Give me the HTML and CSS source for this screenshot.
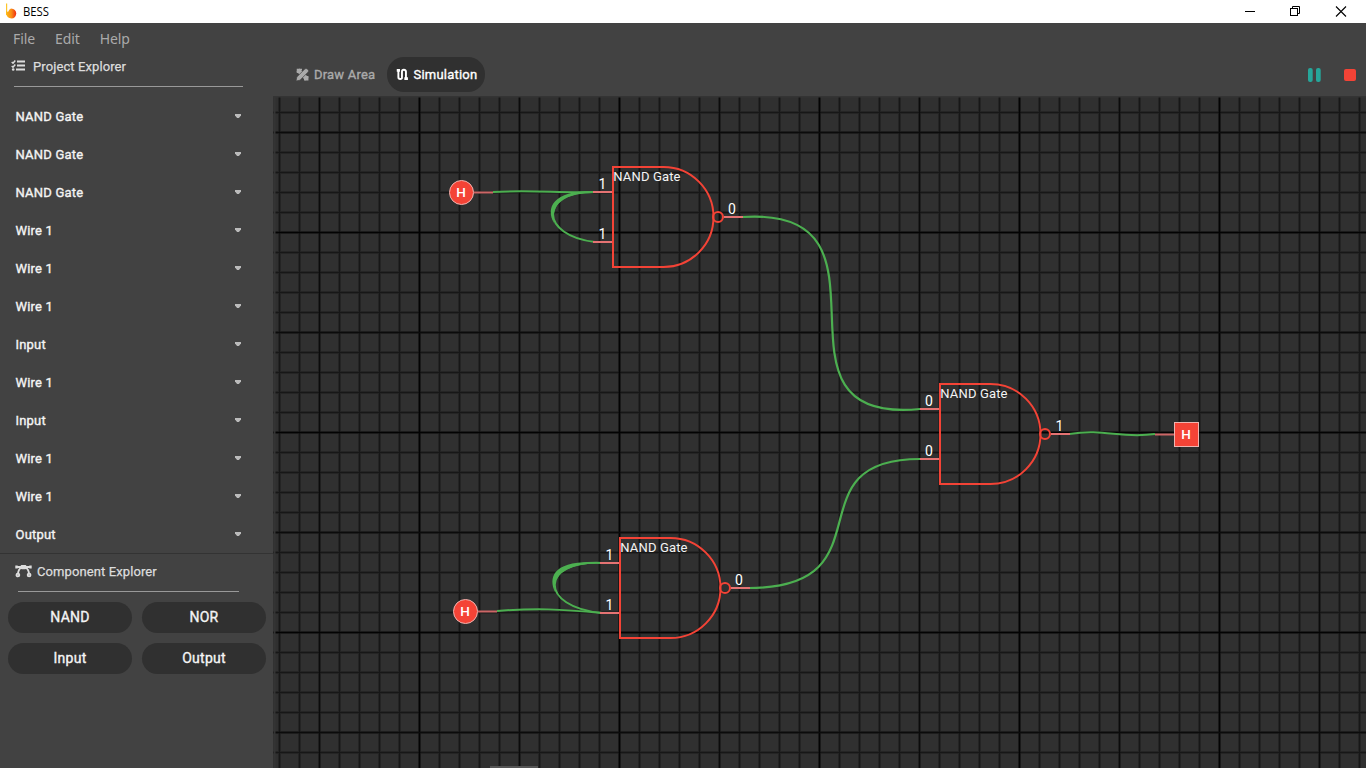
FILE: index.html
```html
<!DOCTYPE html>
<html lang="en"><head><meta charset="utf-8"><title>BESS</title><link rel="stylesheet" href="styles.css"></head>
<body>
<header class="titlebar">
<svg class="logo" width="12" height="17" viewBox="0 0 12 17"><defs><linearGradient id="flame"><stop offset="0" stop-color="#fdb913"/><stop offset=".5" stop-color="#f98e16"/><stop offset="1" stop-color="#ef2b13"/></linearGradient></defs><path d="M.6.5V12" stroke="#fdc52b" stroke-width="1.2"/><path d="M.2 8L2 9Q3 6 5 5.500Q10 6 10.300 10.500Q9.500 15.500 5.500 15.500Q1 15 .2 11Z" fill="url(#flame)"/></svg>
<span class="app-name">BESS</span>
<svg class="window-controls" width="106" height="22" viewBox="0 0 106 22" fill="none" stroke="#000"><path d="M1 10.500H11M48.500 7.500V5.500H55.500V12.500H53.500"/><rect x="46.500" y="7.500" width="7" height="7"/><path d="M92 5.500L102 15.500M102 5.500L92 15.500" stroke-width="1.100"/></svg>
</header>
<div class="app">
<aside class="sidebar">
<nav class="menu"><span>File</span><span>Edit</span><span>Help</span></nav>
<section class="project">
<h2 class="heading"><svg width="14" height="12" viewBox="0 0 14 12" fill="none" stroke="currentColor"><path d="M.7 2L2 3.200L4.300 .5M.7 6L2 7.200L4.300 4.500" stroke-width="1.500"/><path d="M6 1.500H14M6 5.500H14M5 9.500H14" stroke-width="1.900"/><circle cx="2.200" cy="9.500" r="1.300" fill="currentColor" stroke="none"/></svg><span>Project Explorer</span></h2>
<ul class="items"><li>NAND Gate</li><li>NAND Gate</li><li>NAND Gate</li><li>Wire 1</li><li>Wire 1</li><li>Wire 1</li><li>Input</li><li>Wire 1</li><li>Input</li><li>Wire 1</li><li>Wire 1</li><li>Output</li></ul>
</section>
<section class="components">
<h2 class="heading component-heading"><svg width="17" height="13" viewBox="0 0 17 13" fill="none" stroke="currentColor" stroke-width="1.900"><path d="M1 2H16M6.500 2.500Q3.500 4 3 8.500M10.500 2.500Q13.500 4 14 8.500"/><rect x="6.500" y=".8" width="4" height="2.600" rx=".7" fill="currentColor"/><circle cx="2.900" cy="10" r="1.400"/><circle cx="14.100" cy="10" r="1.400"/><path d="M.3 2h2.400M14.300 2h2.400" stroke-width="3"/></svg><span>Component Explorer</span></h2>
<div class="buttons"><button>NAND</button><button>NOR</button><button>Input</button><button>Output</button></div>
</section>
</aside>
<main class="workspace">
<div class="toolbar">
<div class="tab"><svg width="13" height="13" viewBox="0 0 13 13"><path d="M.5 3.500L3.500 .5L12.500 9.500L9.500 12.500Z" fill="currentColor"/><path d="M0 13L.8 9L9 .8Q10 0 11.800 1.300Q13.300 3 12.200 4L4 12.200Z" fill="currentColor" stroke="#424242" stroke-width=".7"/><path d="M6 1.500H1.500V5M8 11.700H11.700V8" fill="none" stroke="currentColor" stroke-width="1.500"/></svg>Draw Area</div>
<div class="tab active"><svg width="13" height="13" viewBox="0 0 13 13" fill="none" stroke="currentColor" stroke-width="2"><path d="M2.500 2V9.500Q2.500 11.300 4.500 11.300T6.300 9.500V3.500Q6.300 1.500 8.300 1.500T10.500 3.500V11"/><path d="M.8 2.200H4.200M8.800 10.800H12.600" stroke-width="3"/></svg>Simulation</div>
<div class="playback"><svg width="13" height="14" viewBox="0 0 13 14" fill="#26a69a"><rect width="4.700" height="14" rx="2"/><rect x="8" width="4.700" height="14" rx="2"/></svg><span class="stop"></span></div>
</div>
<svg class="canvas" width="1093" height="672" viewBox="273 96 1093 672">
<defs>
<g id="nand"><path d="M0 0H50.500A50 50 0 0 1 50.500 100H0Z" fill="none" stroke="#f44336" stroke-width="2"/><circle cx="105" cy="50" r="5" fill="none" stroke="#f44336" stroke-width="2"/><path d="M-20 25H-1M-20 75H-1M111 50H130" stroke="#e57373" stroke-width="2"/><text x="0.300" y="14">NAND Gate</text></g>
</defs>
<rect x="273" y="96" width="1093" height="672" fill="#303030"/>
<g id="grid"></g>
<path d="M273 96.500H1366M274.500 96V768" fill="none" stroke="#343434" stroke-width="2"/>
<g fill="none" stroke="#4caf50" stroke-width="2">
<path d="M493 192C530 190 560 193 595 192"/><path d="M595 192C538 191 540 236 595 242"/>
<path d="M742 217C914 205 750 426 920 409" stroke-width="2.200"/><path d="M749 588C892 588 789 459 920 459" stroke-width="2.200"/>
<path d="M602 563C540 560 538 607 602 613"/><path d="M497 611C535 608 560 609 602 613"/>
<path d="M1069 434C1105 428 1120 439 1155 434"/>
</g>
<g fill="#4caf50"><path d="M595 191C554 190 545 207 554 223C552 205 561 193 595 192.500Z"/><path d="M602 562.500C553 559 548 577 555 592C553 575 565 563 602 563.500Z"/></g>
<g><use href="#nand" x="613" y="167"/><use href="#nand" x="620" y="538"/><use href="#nand" x="940" y="384"/></g>
<g stroke="#c66" stroke-width="2"><path d="M474 192.500H493M478 611.500H497M1155 434.500H1174"/></g>
<g fill="#f44336" stroke="#efb4b0"><circle cx="461.500" cy="192.500" r="12"/><circle cx="465.500" cy="611.500" r="12"/><rect x="1174.500" y="422.500" width="24" height="24"/></g>
<g class="logic"><text x="598.500" y="189">1</text><text x="598.500" y="239">1</text><text x="728" y="214">0</text><text x="605.500" y="560">1</text><text x="605.500" y="610">1</text><text x="735" y="585">0</text><text x="925" y="406">0</text><text x="925" y="456">0</text><text x="1055.500" y="431">1</text></g>
<g class="state"><text x="461" y="197">H</text><text x="465" y="616">H</text><text x="1186" y="439">H</text></g>
<rect x="490" y="766" width="48" height="2" fill="#555"/>
</svg>
</main>
</div>
<script src="grid.js"></script>
</body></html>
```
FILE: styles.css
```css
*{box-sizing:border-box}
body{margin:0;width:1366px;height:768px;overflow:hidden;background:#424242;font:400 13px Roboto,sans-serif;color:#f4f4f4}
.titlebar{height:23px;background:white;color:#000;display:flex;align-items:center;padding-left:6px}
.logo{margin-top:-1px}
.app-name{font:12px "Open Sans",sans-serif;margin-left:5px;transform:scaleX(.94);transform-origin:left}
.window-controls{margin-left:auto;margin-right:16px}
.app{display:flex;height:745px}
.sidebar{width:273px;flex:none}
.menu{height:30px;padding:6px 13px 0;display:flex;gap:20px;font:14px/20px "Noto Sans",sans-serif;color:#aaa;letter-spacing:-.1px}
.project{height:500px}
.heading{margin:0 30px 0 11px;height:34px;display:flex;gap:8px;padding-top:6px;font:400 13px/15px Roboto,sans-serif;color:#ddd;letter-spacing:.1px;-webkit-text-stroke:.25px currentColor;position:relative}
.heading svg{margin-top:1px}
.heading::after{content:"";position:absolute;left:3px;right:0;bottom:0;height:1px;background:#999}
.items{list-style:none;margin:10px 0 0;padding:0 30px 0 15.500px;letter-spacing:.2px;-webkit-text-stroke:.35px currentColor}
.items li{height:38px;display:flex;align-items:center;justify-content:space-between}
.items li::after{content:"";width:6px;height:4px;margin-right:2px;background:#bbb;clip-path:polygon(0 0,100% 0,100% 40%,65% 100%,35% 100%,0 40%)}
.components{border-top:1px solid #333}
.component-heading{height:38px;margin:0 34px 0 15px;padding-top:10px;gap:5px}
.buttons{display:grid;grid-template-columns:124px 124px;gap:10px;padding:10px 8px}
.buttons button{height:31px;border:0;border-radius:16px;background:#303030;color:#f4f4f4;font:400 14px Roboto,sans-serif;letter-spacing:.25px;-webkit-text-stroke:.35px currentColor;padding:0 0 1px}
.workspace{flex:1;min-width:0}
.toolbar{height:73px;display:flex;align-items:flex-end;padding:0 10px 4px 14px}
.tab{height:35px;display:flex;align-items:center;gap:5px;padding:0 9px;color:#aaa;letter-spacing:.2px;-webkit-text-stroke:.35px currentColor;white-space:nowrap}
.tab.active{width:98px;margin-left:3px;padding:0 8px 0 9px;border-radius:17px;background:#303030;color:#fff}
.playback{height:34px;display:flex;align-items:center;gap:23px;margin-left:auto}
.stop{width:12px;height:12px;border-radius:2px;background:#f44336}
.canvas{display:block;font:400 13px Roboto,sans-serif;letter-spacing:.15px;fill:#f4f4f4}
.canvas use{-webkit-text-stroke:.35px #f4f4f4}
.logic{font:400 14px Roboto,sans-serif;letter-spacing:0;fill:#fff}
.state{font:500 13.5px Roboto,sans-serif;letter-spacing:0;fill:#fff;text-anchor:middle}
```
FILE: grid.js
```js
const grid = document.getElementById('grid');
function line(d, color, width) {
  const el = document.createElementNS('http://www.w3.org/2000/svg', 'path');
  el.setAttribute('d', d);
  el.setAttribute('stroke', color);
  el.setAttribute('stroke-width', width);
  grid.appendChild(el);
}
const lines = [];
for (let x = 279.5; x < 1366; x += 20) {
  lines.push([`M${x} 97V768`, x % 100 === 19.5, x % 200 === 19.5]);
}
for (let y = 112.5; y < 768; y += 20) {
  lines.push([`M273 ${y}H1366`, y % 100 === 32.5, y % 200 === 32.5]);
}
lines.forEach(([d]) => line(d, '#252525', 3));
lines.filter(([, major]) => !major).forEach(([d]) => line(d, '#171717', 1.1));
lines.filter(([, major]) => major).forEach(([d, , strong]) => line(d, strong ? '#030303' : '#0b0b0b', strong ? 1.6 : 1.4));
```
